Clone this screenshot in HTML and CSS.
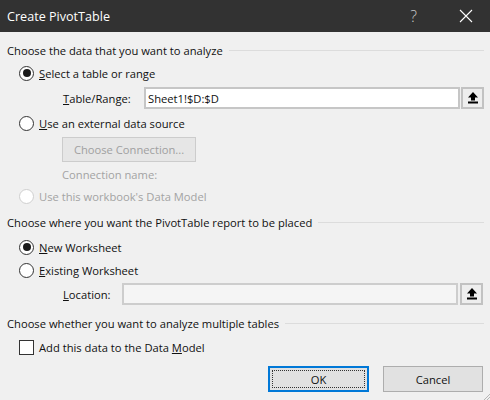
FILE: index.html
```html
<!DOCTYPE html>
<html lang="en">
<head>
<meta charset="utf-8">
<title>Create PivotTable</title>
<link rel="stylesheet" href="styles.css">
</head>
<body>
<div class="dialog">
  <div class="titlebar">
    <span class="title">Create PivotTable</span>
    <span class="help">?</span>
    <span class="close">
      <svg width="14" height="14" viewBox="0 0 14 14"><path d="M1 1 L13 13 M13 1 L1 13" stroke="#ffffff" stroke-width="1.1" fill="none"/></svg>
    </span>
  </div>
  <div class="content">
    <div class="section s1"><span>Choose the data that you want to analyze</span><i class="rule"></i></div>
    <div class="opt mt3"><span class="radio on"></span><span><u>S</u>elect a table or range</span></div>
    <div class="field mt4">
      <span class="flabel w-range"><u>T</u>able/Range:</span>
      <div class="input"><span class="val">Sheet1!$D:$D</span></div>
      <span class="pick">
        <svg width="10" height="12" viewBox="0 0 10 12"><path d="M5 0 L10 5.5 L7 5.5 L7 8.5 L3 8.5 L3 5.5 L0 5.5 Z" fill="#000"/><rect x="0" y="9.5" width="10" height="2" fill="#000"/></svg>
      </span>
    </div>
    <div class="opt mt4"><span class="radio"></span><span><u>U</u>se an external data source</span></div>
    <div class="connrow mt4"><span class="connbtn">Choose Connection...</span></div>
    <div class="conntext mt3">Connection name:</div>
    <div class="opt disabled mt1"><span class="radio"></span><span>Use this workbook's Data Model</span></div>
    <div class="section mt6"><span>Choose where you want the PivotTable report to be placed</span><i class="rule"></i></div>
    <div class="opt mt5"><span class="radio on"></span><span><u>N</u>ew Worksheet</span></div>
    <div class="opt mt3"><span class="radio"></span><span><u>E</u>xisting Worksheet</span></div>
    <div class="field loc mt3">
      <span class="flabel w-loc"><u>L</u>ocation:</span>
      <div class="input off"></div>
      <span class="pick">
        <svg width="10" height="12" viewBox="0 0 10 12"><path d="M5 0 L10 5.5 L7 5.5 L7 8.5 L3 8.5 L3 5.5 L0 5.5 Z" fill="#000"/><rect x="0" y="9.5" width="10" height="2" fill="#000"/></svg>
      </span>
    </div>
    <div class="section mt8"><span>Choose whether you want to analyze multiple tables</span><i class="rule"></i></div>
    <div class="opt mt4"><span class="check"></span><span>Add this data to the Data <u>M</u>odel</span></div>
    <div class="actions">
      <span class="btn ok"><span class="focus">OK</span></span>
      <span class="btn">Cancel</span>
    </div>
  </div>
  <svg class="grip" width="8" height="8" viewBox="0 0 8 8"><path d="M8 2 L2 8 M8 5 L5 8" stroke="#b5b5b5" stroke-width="1"/></svg>
</div>
</body>
</html>
```

FILE: styles.css
```css
html, body {
  margin: 0;
  padding: 0;
}
body {
  background: #f0f0f0;
  font-family: "Open Sans", "Noto Sans", sans-serif;
  font-size: 11.2px;
  color: #111;
}
.dialog {
  position: relative;
  width: 490px;
  height: 400px;
  background: #f0f0f0;
  overflow: hidden;
}
.titlebar {
  height: 32px;
  background: #323232;
  color: #fff;
  display: flex;
  align-items: center;
}
.title {
  padding-left: 7px;
  font-size: 12.6px;
  flex: 1;
}
.help {
  color: #c8c8c8;
  font-size: 16px;
  font-weight: 300;
  margin-right: 42px;
}
.close {
  display: flex;
  margin-right: 17px;
}
.content {
  padding: 0 6px 0 7px;
  display: flex;
  flex-direction: column;
}
.section {
  height: 20px;
  display: flex;
  align-items: center;
  white-space: nowrap;
}
.s1 { margin-top: 8px; }
.rule {
  flex: 1;
  height: 1px;
  background: #dcdcdc;
  margin-left: 6px;
}
.mt1 { margin-top: 1px; }
.mt3 { margin-top: 3px; }
.mt4 { margin-top: 4px; }
.mt5 { margin-top: 5px; }
.mt6 { margin-top: 6px; }
.mt8 { margin-top: 8px; }
.opt {
  height: 20px;
  display: flex;
  align-items: center;
  padding-left: 12px;
  gap: 5px;
}
.opt.disabled {
  color: #a3a3a3;
}
.radio {
  width: 13px;
  height: 13px;
  border: 1px solid #333;
  border-radius: 50%;
  background: #fff;
  display: flex;
  align-items: center;
  justify-content: center;
  flex: none;
}
.radio.on::after {
  content: "";
  width: 8px;
  height: 8px;
  border-radius: 50%;
  background: #1a1a1a;
}
.disabled .radio {
  border-color: #cfcfcf;
}
.check {
  width: 13px;
  height: 13px;
  border: 1px solid #333;
  background: #fff;
  flex: none;
}
.field {
  height: 22px;
  display: flex;
  align-items: center;
  padding-left: 56px;
}
.flabel {
  flex: none;
}
.w-range { width: 81px; }
.w-loc { width: 59px; }
.input {
  flex: 1;
  height: 18px;
  border: 2px solid #c6c6c6;
  background: #fff;
  display: flex;
  align-items: center;
  padding-left: 2px;
}
.input.off {
  background: #f5f5f5;
  border-color: #cdcdcd;
}
.pick {
  width: 19px;
  height: 18px;
  margin-left: 1px;
  border: 2px solid #c2c2c2;
  background: #eeeeee;
  display: flex;
  align-items: center;
  justify-content: center;
  flex: none;
}
.loc {
  padding-right: 1px;
}
.loc .pick {
  margin-left: 2px;
}
.connrow {
  display: flex;
  padding-left: 55px;
}
.connbtn {
  width: 132px;
  height: 23px;
  border: 1px solid #cccccc;
  background: #e6e6e6;
  color: #a0a0a0;
  display: flex;
  align-items: center;
  justify-content: center;
}
.conntext {
  height: 20px;
  line-height: 20px;
  padding-left: 55px;
  color: #a3a3a3;
}
.actions {
  margin-top: 9px;
  display: flex;
  justify-content: flex-end;
  gap: 14px;
  padding-right: 1px;
}
.btn {
  width: 98px;
  height: 24px;
  border: 1px solid #adadad;
  background: #e1e1e1;
  display: flex;
  align-items: center;
  justify-content: center;
  box-sizing: content-box;
}
.btn.ok {
  width: 97px;
  height: 22px;
  border: 2px solid #0078d7;
}
.focus {
  width: 91px;
  height: 16px;
  border: 1px dotted #333;
  display: flex;
  align-items: center;
  justify-content: center;
}
.grip {
  position: absolute;
  right: 0;
  bottom: 0;
}
```
